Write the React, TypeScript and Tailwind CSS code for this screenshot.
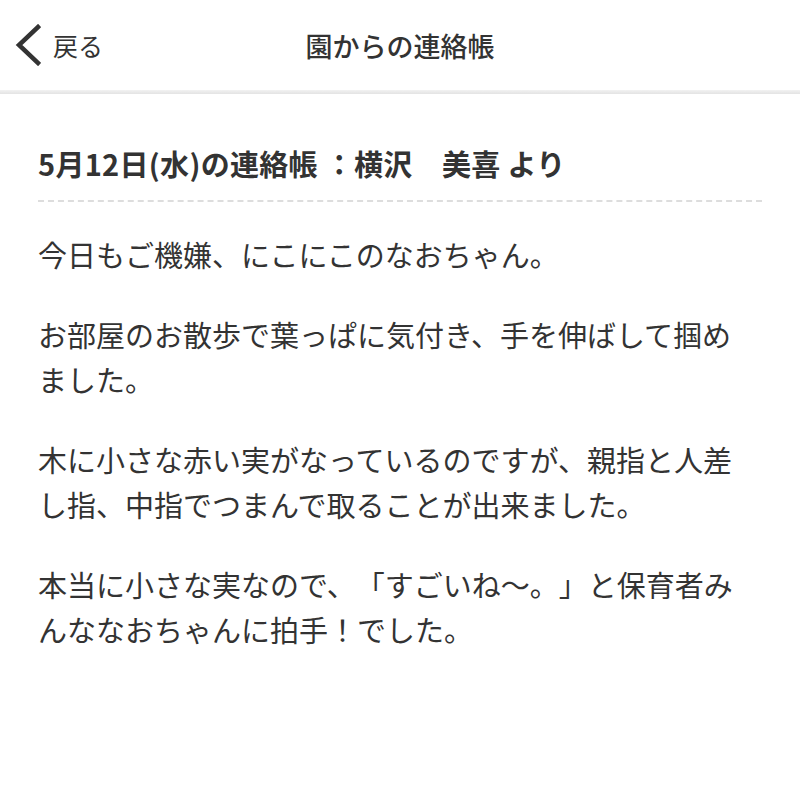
import React from "react";

const font = { fontFamily: '"Noto Sans CJK JP", "Noto Sans", sans-serif' };

export default function App() {
  return (
    <div className="min-h-[794px] w-[800px] bg-white text-[#333333] [text-spacing-trim:space-all]" style={font}>
      <header className="relative flex h-[90px] items-center justify-center">
        <button className="absolute left-0 top-0 flex h-[90px] items-center pl-[15px]">
          <svg width="26" height="42" viewBox="0 0 26 42" className="mr-[12px]">
            <polyline points="23,3 4,21 23,39" fill="none" stroke="#333333" strokeWidth="4.5" strokeLinecap="square" strokeLinejoin="miter" />
          </svg>
          <span className="text-[25px] leading-none">戻る</span>
        </button>
        <h1 className="text-[27px] font-medium leading-none">園からの連絡帳</h1>
      </header>
      <div className="h-[4px] bg-gradient-to-b from-[#f2f2f2] to-[#e3e3e3]" />
      <main className="px-[38px]">
        <div className="pt-[49px] pb-[17px] border-b-2 border-dashed border-[#dddddd]">
          <h2 className="text-[29px] font-bold leading-[40px] tracking-[0.3px]">5月12日(水)の連絡帳 ：横沢　美喜 より</h2>
        </div>
        <div className="pt-[30px] pr-[3px] text-[29px] leading-[45px]">
          <p>今日もご機嫌、にこにこのなおちゃん。</p>
          <p className="mt-[35px]">お部屋のお散歩で葉っぱに気付き、手を伸ばして掴めました。</p>
          <p className="mt-[35px]">木に小さな赤い実がなっているのですが、親指と人差し指、中指でつまんで取ることが出来ました。</p>
          <p className="mt-[35px]">本当に小さな実なので、「すごいね〜。」と保育者みんななおちゃんに拍手！でした。</p>
        </div>
      </main>
    </div>
  );
}
